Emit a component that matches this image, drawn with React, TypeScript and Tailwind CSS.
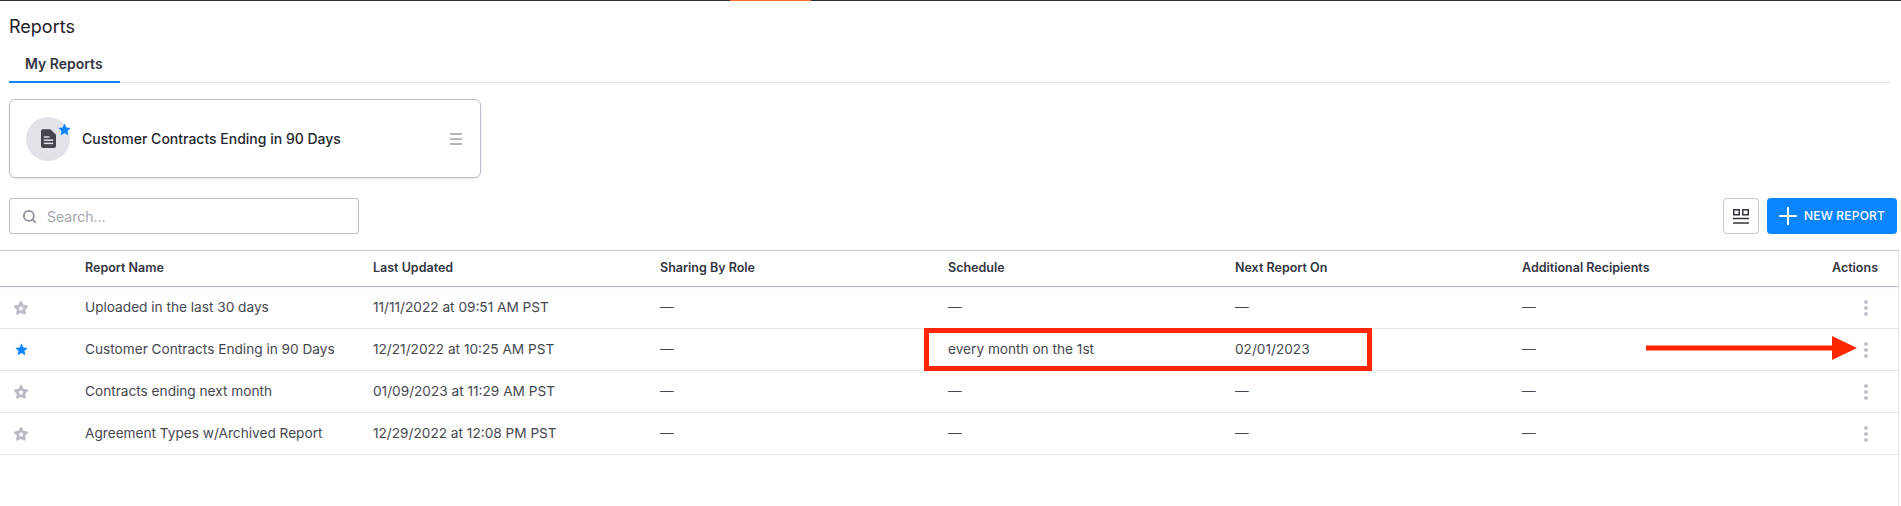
import React from "react";
import { Search, Plus } from "lucide-react";

const reports = [
  { name: "Uploaded in the last 30 days", updated: "11/11/2022 at 09:51 AM PST", schedule: "—", next: "—", starred: false },
  { name: "Customer Contracts Ending in 90 Days", updated: "12/21/2022 at 10:25 AM PST", schedule: "every month on the 1st", next: "02/01/2023", starred: true },
  { name: "Contracts ending next month", updated: "01/09/2023 at 11:29 AM PST", schedule: "—", next: "—", starred: false },
  { name: "Agreement Types w/Archived Report", updated: "12/29/2022 at 12:08 PM PST", schedule: "—", next: "—", starred: false },
];

const STAR = "M12 2.5l2.95 6.2 6.8.9-4.98 4.7 1.27 6.75L12 17.75 5.96 21.05l1.27-6.75L2.25 9.6l6.8-.9z";

function Star({ filled }: { filled: boolean }) {
  if (filled) {
    return (
      <svg width="15" height="15" viewBox="0 0 24 24">
        <path d={STAR} fill="#0a84ff" />
      </svg>
    );
  }
  return (
    <svg width="14" height="14" viewBox="0 0 24 24">
      <path d={STAR} fill="none" stroke="#b9bcc4" strokeWidth="4.5" strokeLinejoin="round" />
    </svg>
  );
}

function Dots() {
  return (
    <div className="flex flex-col gap-[2px]">
      <span className="w-[4px] h-[4px] rounded-full bg-[#c0c2cb]" />
      <span className="w-[4px] h-[4px] rounded-full bg-[#c0c2cb]" />
      <span className="w-[4px] h-[4px] rounded-full bg-[#c0c2cb]" />
    </div>
  );
}

const gridCols = "grid grid-cols-[85px_288px_287px_288px_287px_287px_287px_1fr] items-center";

export default function App() {
  return (
    <main className="relative w-[1901px] h-[506px] overflow-hidden bg-white font-['Inter',sans-serif] text-[#33363f]">
      {/* top bar */}
      <div className="flex h-[1px]">
        <div className="w-[730px] bg-[#2a2f38]" />
        <div className="w-[81px] bg-[#ff6a2b]" />
        <div className="flex-1 bg-[#2a2f38]" />
      </div>

      <div className="pl-[9px] pr-[4px]">
        <h1 className="text-[18px] leading-[20px] mt-[16px] text-[#1f2229]">Reports</h1>

        <div className="mt-[9px] border-b border-[#e4e6ea] h-[37px] mr-[7px]">
          <div className="w-[111px] h-[37px] border-b-2 border-[#0a84ff] pl-[16px] pt-[9px] text-[14px] leading-[18px] font-semibold">
            My Reports
          </div>
        </div>

        <div className="mt-[16px] w-[472px] h-[79px] border border-[#b9bfca] rounded-[6px] shadow-[0_1px_2px_rgba(0,0,0,0.08)] flex items-center pl-[16px] pr-[18px]">
          <div className="relative w-[44px] h-[44px] rounded-full bg-[#e1e3e8] flex items-center justify-center">
            <svg width="15" height="19" viewBox="0 0 16 20">
              <path d="M2 0h8l6 6v12a2 2 0 0 1-2 2H2a2 2 0 0 1-2-2V2a2 2 0 0 1 2-2z" fill="#44464e" />
              <rect x="3" y="7.6" width="6" height="1.6" fill="#e1e3e8" />
              <rect x="3" y="11" width="10" height="1.6" fill="#e1e3e8" />
              <rect x="3" y="14.4" width="10" height="1.6" fill="#e1e3e8" />
            </svg>
            <span className="absolute top-[5px] right-[-2px]">
              <Star filled />
            </span>
          </div>
          <span className="ml-[12px] text-[14px] font-medium text-[#24262d]">Customer Contracts Ending in 90 Days</span>
          <div className="ml-auto flex flex-col gap-[3px]">
            <span className="w-[12px] h-[2px] bg-[#b4b6bb]" />
            <span className="w-[12px] h-[2px] bg-[#b4b6bb]" />
            <span className="w-[12px] h-[2px] bg-[#b4b6bb]" />
          </div>
        </div>

        <div className="mt-[20px] flex items-center justify-between">
          <div className="w-[350px] h-[36px] border border-[#b9bfca] rounded-[3px] flex items-center pl-[12px]">
            <Search size={15} strokeWidth={3} className="text-[#8e9199]" />
            <span className="ml-[10px] text-[14px] text-[#a3a6ad]">Search...</span>
          </div>
          <div className="flex items-center gap-[8px]">
            <div className="w-[36px] h-[36px] border border-[#c3c6cc] rounded-[4px] flex items-center justify-center">
              <svg width="16" height="15" viewBox="0 0 16 15" fill="none" stroke="#33363f">
                <rect x="0.75" y="0.75" width="5.5" height="5" strokeWidth="1.5" />
                <rect x="9.75" y="0.75" width="5.5" height="5" strokeWidth="1.5" />
                <path d="M0 9.5h16M0 14h16" strokeWidth="1.6" />
              </svg>
            </div>
            <div className="w-[130px] h-[36px] bg-[#0a84ff] rounded-[4px] flex items-center pl-[7px] text-white">
              <Plus size={28} strokeWidth={1.7} absoluteStrokeWidth={false} />
              <span className="ml-[2px] text-[12px] font-medium tracking-[0.2px]">NEW REPORT</span>
            </div>
          </div>
        </div>
      </div>

      <section className="mt-[16px] mr-[2px] border-t border-[#c3c7cf] border-r border-r-[#e4e6ea] h-[256px]">
        <div className={`${gridCols} h-[36px] border-b border-[#b9bdc6] text-[12.5px] font-semibold shadow-[0_1px_2px_rgba(0,0,0,0.06)]`}>
          <span />
          <span>Report Name</span>
          <span>Last Updated</span>
          <span>Sharing By Role</span>
          <span>Schedule</span>
          <span>Next Report On</span>
          <span>Additional Recipients</span>
          <span className="text-right pr-[20px]">Actions</span>
        </div>
        {reports.map((r) => (
          <div key={r.name} className={`${gridCols} h-[42px] border-b border-[#e4e5ea] text-[13.65px] text-[#45474f]`}>
            <span className="pl-[14px] flex">
              <Star filled={r.starred} />
            </span>
            <span>{r.name}</span>
            <span>{r.updated}</span>
            <span>—</span>
            <span>{r.schedule}</span>
            <span>{r.next}</span>
            <span>—</span>
            <span className="flex justify-end pr-[30px]">
              <Dots />
            </span>
          </div>
        ))}
      </section>

      {/* red annotations drawn over the screenshot */}
      <div className="absolute left-[924px] top-[328px] w-[448px] h-[43px] border-[5px] border-[#ff2600]" />
      <svg className="absolute left-[1640px] top-[330px]" width="225" height="36" viewBox="0 0 225 36">
        <path d="M6 15.5h187v5H6z" fill="#ff2600" />
        <path d="M192 6l25 12-25 12z" fill="#ff2600" />
      </svg>
    </main>
  );
}
